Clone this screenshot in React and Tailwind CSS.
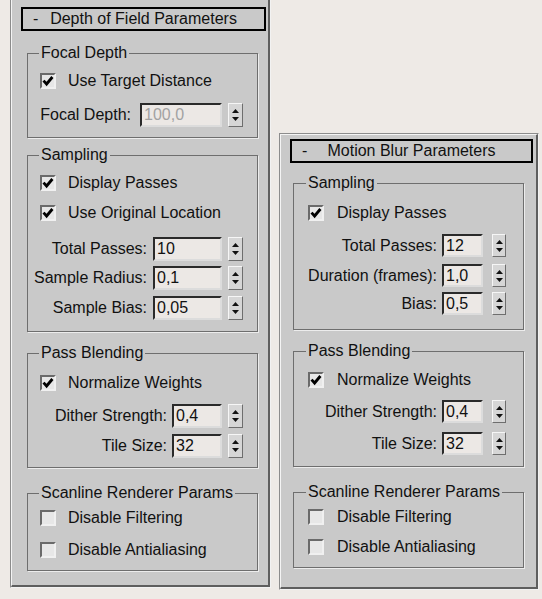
import React from "react";

function Header({ title }) {
  return (
    <div className="h-[24px] shrink-0 border-2 border-black bg-[#c9c9c9] grid grid-cols-[1fr_auto_1fr] items-center leading-none">
      <span className="pl-[10px]">-</span>
      <span>{title}</span>
      <span />
    </div>
  );
}

function Group({ title, className, legendClass, children }) {
  return (
    <fieldset className={"border border-[#6e6e6e] shadow-[1px_1px_0_#ececec] " + className}>
      <legend className={"px-[2px] leading-[16px] " + legendClass}>{title}</legend>
      {children}
    </fieldset>
  );
}

function Box({ checked }) {
  return (
    <div className="w-[16px] h-[16px] shrink-0 border-2 border-t-[#6a6a6a] border-l-[#6a6a6a] border-r-[#f0f0f0] border-b-[#f0f0f0] bg-[#e7e7e7] flex items-center justify-center">
      {checked && (
        <svg width="12" height="12" viewBox="0 0 12 12">
          <path d="M1.5 5.6 L4.6 9 L10.4 2" fill="none" stroke="#000" strokeWidth="2.8" />
        </svg>
      )}
    </div>
  );
}

function Check({ label, checked, className, boxClass, textClass }) {
  return (
    <div className={"flex items-center h-[22px] " + className}>
      <div className={boxClass}>
        <Box checked={checked} />
      </div>
      <span className={"leading-none " + textClass}>{label}</span>
    </div>
  );
}

function Spinner({ className }) {
  return (
    <div className={"h-full shrink-0 bg-[#d6d6d6] border border-t-[#f6f6f6] border-l-[#f6f6f6] border-r-[#6e6e6e] border-b-[#6e6e6e] flex flex-col items-center justify-center gap-[4px] " + className}>
      <svg width="7" height="4" viewBox="0 0 7 4">
        <path d="M0 4 L3.5 0 L7 4 Z" fill="#111" />
      </svg>
      <svg width="7" height="4" viewBox="0 0 7 4">
        <path d="M0 0 L7 0 L3.5 4 Z" fill="#111" />
      </svg>
    </div>
  );
}

function Field({ label, value, className, labelClass, inputClass, spinClass, disabled }) {
  return (
    <div className={"flex items-center " + className}>
      <span className={"shrink-0 text-right leading-none whitespace-nowrap " + labelClass}>{label}</span>
      <div
        className={
          "h-full shrink-0 border-2 border-t-[#2a2a2a] border-l-[#2a2a2a] border-r-[#dcdcdc] border-b-[#dcdcdc] bg-[#ece8e5] flex items-center pl-[2px] leading-none " +
          (disabled ? "text-[#a2a2a2] " : "text-[#111] ") +
          inputClass
        }
      >
        {value}
      </div>
      <Spinner className={spinClass} />
    </div>
  );
}

export default function App() {
  return (
    <div className="w-[542px] min-h-[599px] bg-[#eeeae6] flex items-start font-['Liberation_Sans',Arial,sans-serif] text-[16px] text-[#111]">
      {/* Left panel */}
      <div className="ml-[10px] w-[261px] h-[588px] shrink-0 border-l border-r border-b border-l-[#8c8c8c] border-r-[#f2f2f2] border-b-[#f2f2f2]">
        <div className="h-full bg-[#c9c9c9] border-l border-r-2 border-b-2 border-l-[#f4f4f4] border-r-[#5e5e5e] border-b-[#5e5e5e] pl-[9px] pr-[2px] pt-[7px] flex flex-col">
          <Header title="Depth of Field Parameters" />

          <Group title="Focal Depth" className="mt-[14px] ml-[6px] mr-[8px] pb-[10px]" legendClass="ml-[11px]">
            <Check label="Use Target Distance" checked className="mt-[9px]" boxClass="ml-[12px]" textClass="ml-[12px]" />
            <Field
              label="Focal Depth:"
              value="100,0"
              disabled
              className="mt-[11px] h-[24px]"
              labelClass="w-[112px] pr-[9px]"
              inputClass="w-[82px]"
              spinClass="ml-[6px] w-[15px]"
            />
          </Group>

          <Group title="Sampling" className="mt-[9px] ml-[6px] mr-[8px] pb-[11px]" legendClass="ml-[11px]">
            <Check label="Display Passes" checked className="mt-[9px]" boxClass="ml-[12px]" textClass="ml-[12px]" />
            <Check label="Use Original Location" checked className="mt-[8px]" boxClass="ml-[12px]" textClass="ml-[12px]" />
            <Field label="Total Passes:" value="10" className="mt-[13px] h-[24px]" labelClass="w-[125px] pr-[6px]" inputClass="w-[69px]" spinClass="ml-[6px] w-[15px]" />
            <Field label="Sample Radius:" value="0,1" className="mt-[5px] h-[24px]" labelClass="w-[125px] pr-[6px]" inputClass="w-[69px]" spinClass="ml-[6px] w-[15px]" />
            <Field label="Sample Bias:" value="0,05" className="mt-[6px] h-[24px]" labelClass="w-[125px] pr-[6px]" inputClass="w-[69px]" spinClass="ml-[6px] w-[15px]" />
          </Group>

          <Group title="Pass Blending" className="mt-[13px] ml-[6px] mr-[8px] pb-[9px]" legendClass="ml-[11px]">
            <Check label="Normalize Weights" checked className="mt-[11px]" boxClass="ml-[12px]" textClass="ml-[12px]" />
            <Field label="Dither Strength:" value="0,4" className="mt-[10px] h-[24px]" labelClass="w-[144px] pr-[5px]" inputClass="w-[50px]" spinClass="ml-[6px] w-[15px]" />
            <Field label="Tile Size:" value="32" className="mt-[6px] h-[24px]" labelClass="w-[144px] pr-[5px]" inputClass="w-[50px]" spinClass="ml-[6px] w-[15px]" />
          </Group>

          <Group title="Scanline Renderer Params" className="mt-[17px] ml-[6px] mr-[8px] pb-[9px]" legendClass="ml-[11px]">
            <Check label="Disable Filtering" className="mt-[6px]" boxClass="ml-[12px]" textClass="ml-[12px]" />
            <Check label="Disable Antialiasing" className="mt-[10px]" boxClass="ml-[12px]" textClass="ml-[12px]" />
          </Group>
        </div>
      </div>

      {/* Right panel */}
      <div className="ml-[8px] mt-[133px] w-[260px] h-[457px] shrink-0 border border-t-[#8c8c8c] border-l-[#8c8c8c] border-r-[#f2f2f2] border-b-[#f2f2f2]">
        <div className="h-full bg-[#c9c9c9] border-l border-t border-r-2 border-b-2 border-l-[#f4f4f4] border-t-[#f4f4f4] border-r-[#5e5e5e] border-b-[#5e5e5e] pl-[9px] pr-[3px] pt-[4px] flex flex-col">
          <Header title="Motion Blur Parameters" />

          <Group title="Sampling" className="mt-[12px] ml-[3px] mr-[9px] pb-[14px]" legendClass="ml-[12px]">
            <Check label="Display Passes" checked className="mt-[11px]" boxClass="ml-[14px]" textClass="ml-[13px]" />
            <Field label="Total Passes:" value="12" className="mt-[10px] h-[23px]" labelClass="w-[148px] pr-[5px]" inputClass="w-[41px]" spinClass="ml-[9px] w-[14px]" />
            <Field label="Duration (frames):" value="1,0" className="mt-[7px] h-[23px]" labelClass="w-[148px] pr-[5px]" inputClass="w-[41px]" spinClass="ml-[9px] w-[14px]" />
            <Field label="Bias:" value="0,5" className="mt-[5px] h-[23px]" labelClass="w-[148px] pr-[5px]" inputClass="w-[41px]" spinClass="ml-[9px] w-[14px]" />
          </Group>

          <Group title="Pass Blending" className="mt-[13px] ml-[3px] mr-[9px] pb-[11px]" legendClass="ml-[12px]">
            <Check label="Normalize Weights" checked className="mt-[10px]" boxClass="ml-[14px]" textClass="ml-[13px]" />
            <Field label="Dither Strength:" value="0,4" className="mt-[9px] h-[23px]" labelClass="w-[148px] pr-[5px]" inputClass="w-[41px]" spinClass="ml-[9px] w-[14px]" />
            <Field label="Tile Size:" value="32" className="mt-[9px] h-[23px]" labelClass="w-[148px] pr-[5px]" inputClass="w-[41px]" spinClass="ml-[9px] w-[14px]" />
          </Group>

          <Group title="Scanline Renderer Params" className="mt-[17px] ml-[3px] mr-[9px] pb-[9px]" legendClass="ml-[12px]">
            <Check label="Disable Filtering" className="mt-[6px]" boxClass="ml-[14px]" textClass="ml-[13px]" />
            <Check label="Disable Antialiasing" className="mt-[8px]" boxClass="ml-[14px]" textClass="ml-[13px]" />
          </Group>
        </div>
      </div>
    </div>
  );
}
